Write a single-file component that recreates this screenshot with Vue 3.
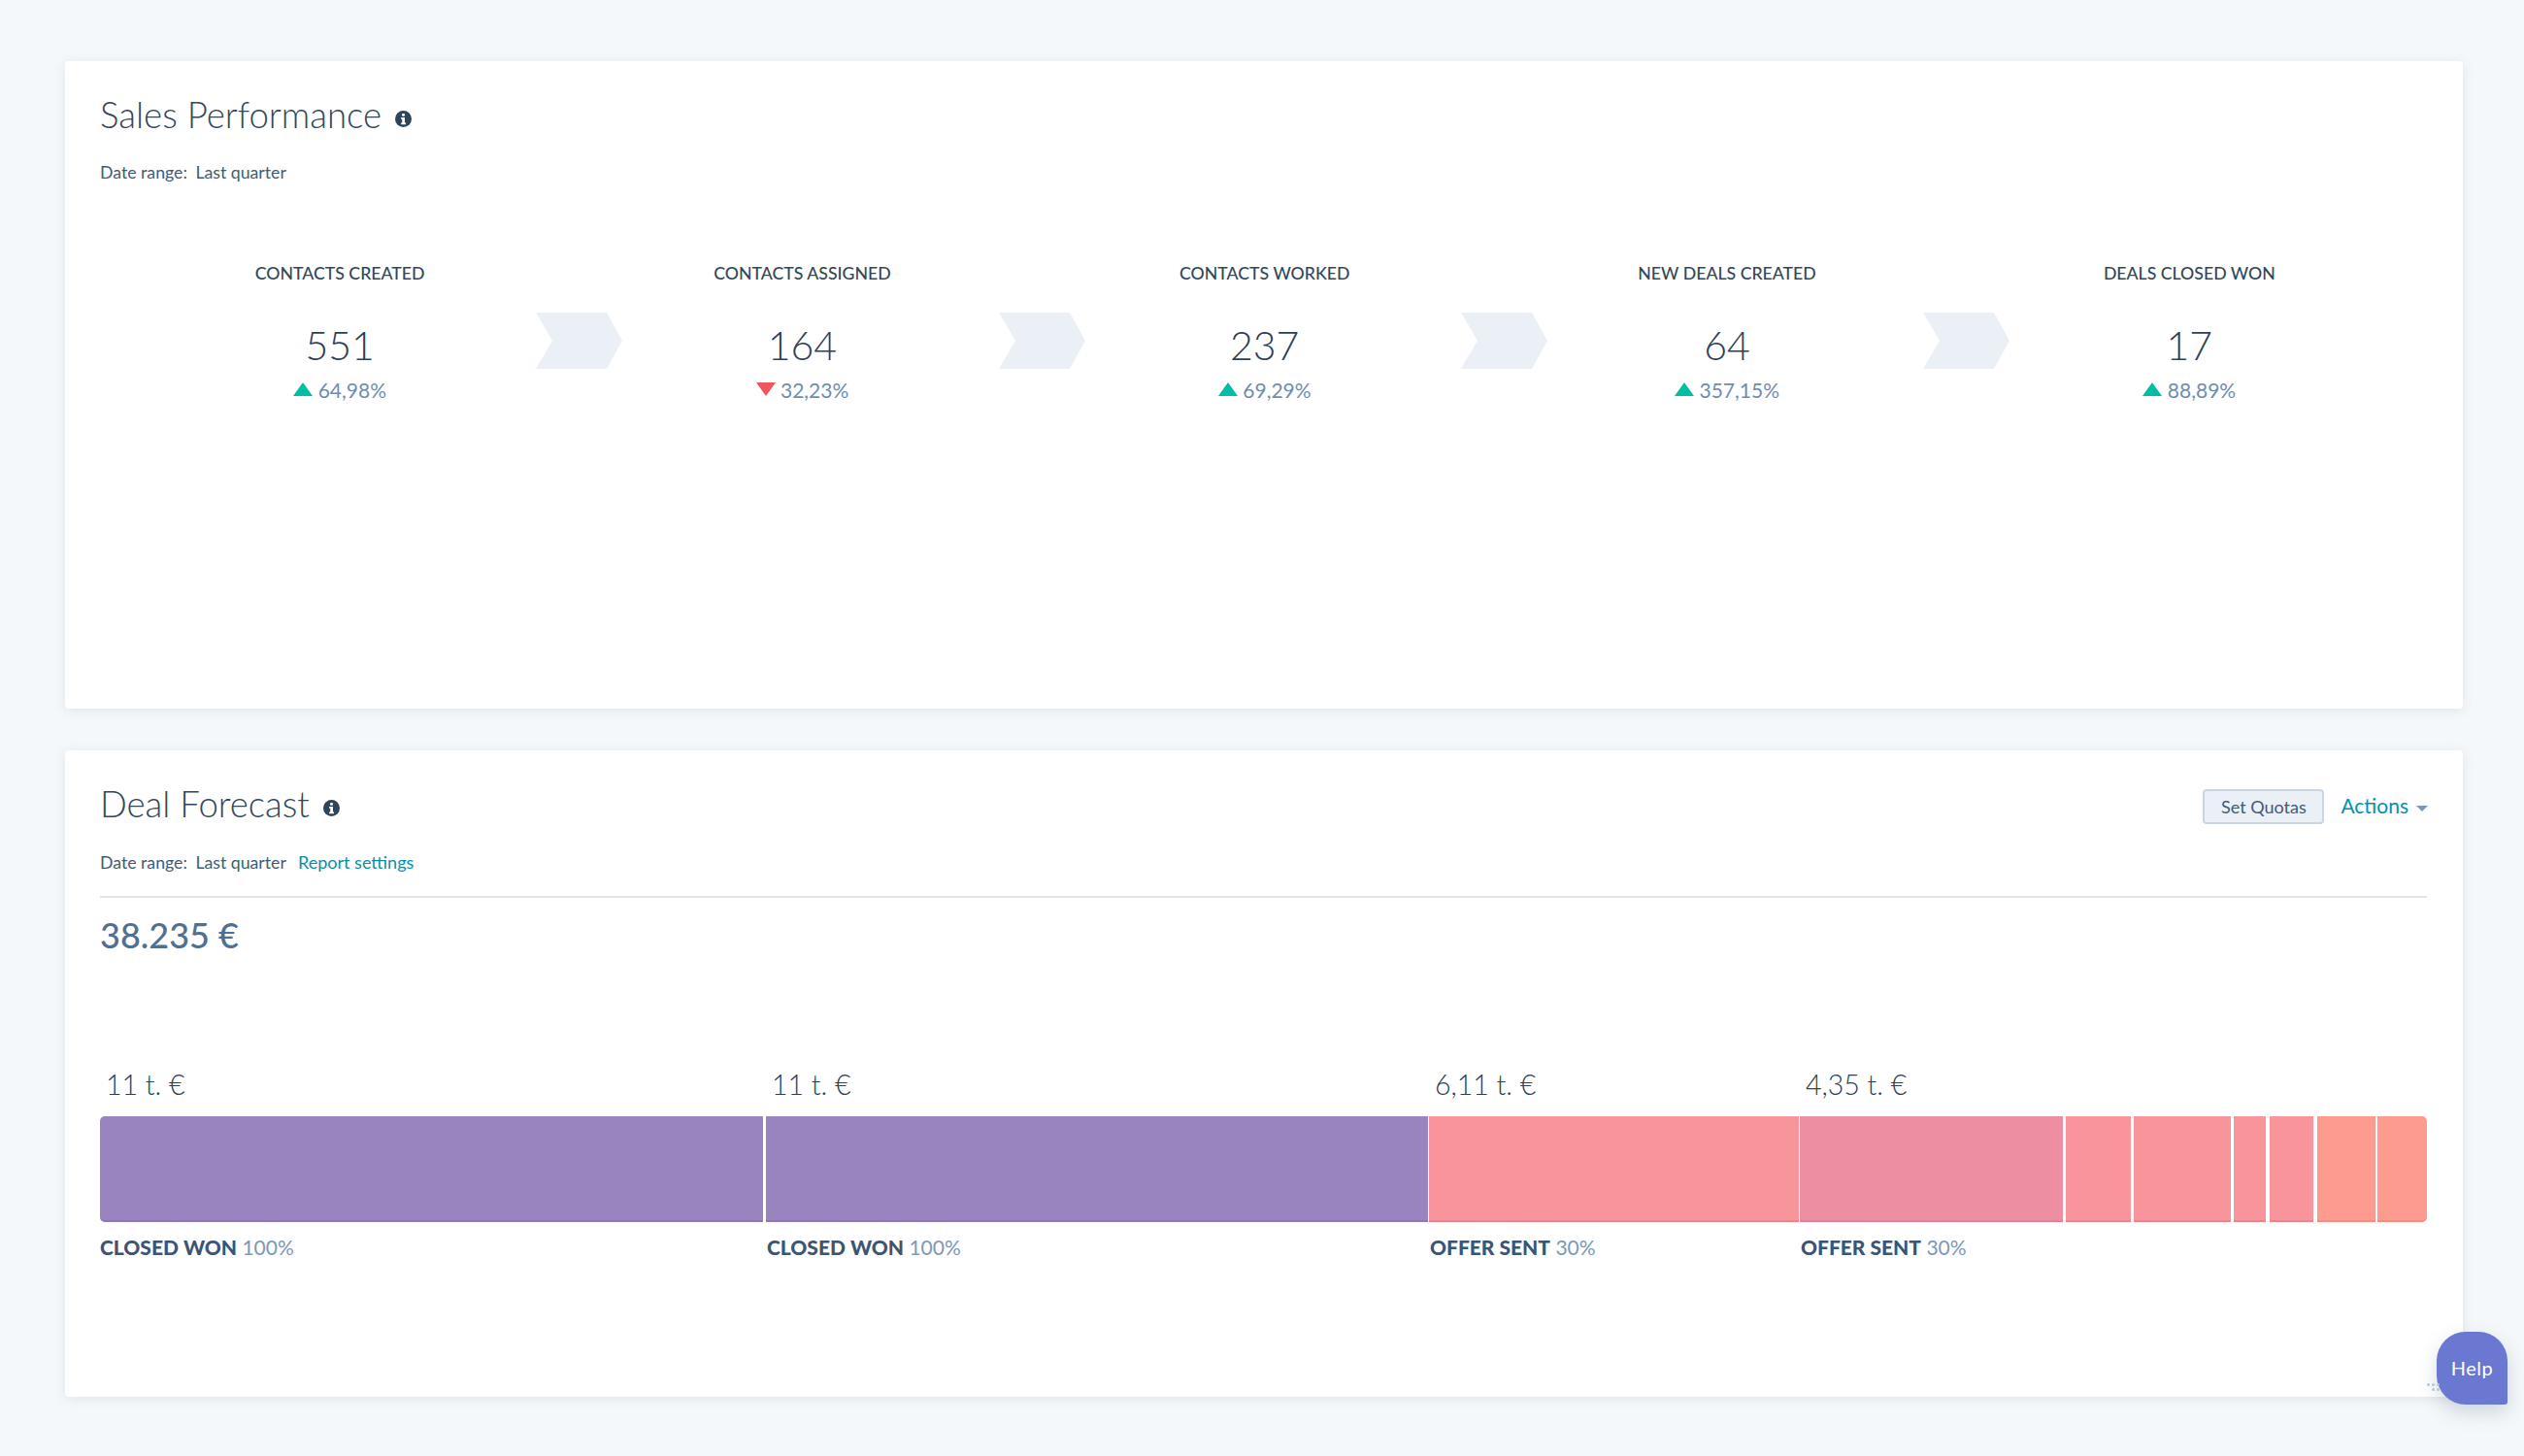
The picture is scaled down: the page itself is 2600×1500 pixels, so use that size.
<script setup>
const stats = [
  { label: 'CONTACTS CREATED', value: '551', change: '64,98%', up: true },
  { label: 'CONTACTS ASSIGNED', value: '164', change: '32,23%', up: false },
  { label: 'CONTACTS WORKED', value: '237', change: '69,29%', up: true },
  { label: 'NEW DEALS CREATED', value: '64', change: '357,15%', up: true },
  { label: 'DEALS CLOSED WON', value: '17', change: '88,89%', up: true }
]

const segments = [
  { width: 683, gap: 3, color: '#9a84c0', edge: '#8f78b8', amount: '11 t. €', stage: 'CLOSED WON', pct: '100%' },
  { width: 682, gap: 1, color: '#9a84c0', edge: '#8f78b8', amount: '11 t. €', stage: 'CLOSED WON', pct: '100%' },
  { width: 381, gap: 1, color: '#f8959b', edge: '#f0828b', amount: '6,11 t. €', stage: 'OFFER SENT', pct: '30%' },
  { width: 271, gap: 3, color: '#ee8ea3', edge: '#e67f96', amount: '4,35 t. €', stage: 'OFFER SENT', pct: '30%' },
  { width: 67, gap: 3, color: '#f8959b', edge: '#f0828b' },
  { width: 100, gap: 3, color: '#f8959b', edge: '#f0828b' },
  { width: 33, gap: 4, color: '#f8959b', edge: '#f0828b' },
  { width: 45, gap: 4, color: '#f8959b', edge: '#f0828b' },
  { width: 60, gap: 2, color: '#fd9b8e', edge: '#f58d80' },
  { width: 51, gap: 0, color: '#fd9b8e', edge: '#f58d80' }
]
</script>

<template>
  <div class="page">
    <section class="card card-sales">
      <h2 class="title">
        Sales Performance
        <svg class="info" viewBox="0 0 16 16">
          <circle cx="8" cy="8" r="8" fill="#2f4359" />
          <rect x="6.6" y="2.8" width="2.8" height="2.6" rx="1" fill="#fff" />
          <path d="M5.8 6.6h3.6v5.2h1v1.6H5.8v-1.6h1V8.2h-1z" fill="#fff" />
        </svg>
      </h2>
      <p class="range">Date range: <span class="range-value">Last quarter</span></p>

      <div class="funnel">
        <template v-for="(stat, i) in stats" :key="stat.label">
          <div class="stat">
            <div class="stat-label">{{ stat.label }}</div>
            <div class="stat-value">{{ stat.value }}</div>
            <div class="stat-change">
              <span class="tri" :class="stat.up ? 'tri-up' : 'tri-down'"></span>
              {{ stat.change }}
            </div>
          </div>
          <svg v-if="i < stats.length - 1" class="chevron" viewBox="0 0 89 58">
            <path d="M0 0h73l16 29-16 29H0l17-29z" fill="#eaf0f6" />
          </svg>
        </template>
      </div>
    </section>

    <section class="card card-forecast">
      <div class="head">
        <h2 class="title">
          Deal Forecast
          <svg class="info" viewBox="0 0 16 16">
            <circle cx="8" cy="8" r="8" fill="#2f4359" />
            <rect x="6.6" y="2.8" width="2.8" height="2.6" rx="1" fill="#fff" />
            <path d="M5.8 6.6h3.6v5.2h1v1.6H5.8v-1.6h1V8.2h-1z" fill="#fff" />
          </svg>
        </h2>
        <div class="head-actions">
          <button class="quota-btn">Set Quotas</button>
          <span class="actions">Actions<span class="caret"></span></span>
        </div>
      </div>
      <p class="range range-line">Date range: <span class="range-value">Last quarter</span> <a class="link">Report settings</a></p>
      <div class="total">38.235 €</div>

      <div class="bar">
        <div
          v-for="(seg, i) in segments"
          :key="i"
          class="seg"
          :style="{ width: seg.width + 'px', marginRight: seg.gap + 'px' }"
        >
          <div class="amount">{{ seg.amount }}</div>
          <div class="block" :style="{ background: seg.color, borderBottomColor: seg.edge }"></div>
          <div v-if="seg.stage" class="stage"><b>{{ seg.stage }}</b> {{ seg.pct }}</div>
        </div>
      </div>
    </section>

    <div class="help">Help</div>
    <div class="grip">
      <i></i><i></i><i></i><i></i><i></i>
    </div>
  </div>
</template>

<style scoped>
.page {
  width: 2600px;
  height: 1500px;
  box-sizing: border-box;
  padding: 63px 63px 0 67px;
  background: #f5f8fa;
  font-family: Lato, "Noto Sans", sans-serif;
  color: #33475b;
  position: relative;
  overflow: hidden;
}

.card {
  background: #fff;
  border-radius: 4px;
  box-shadow: 0 2px 12px rgba(66, 91, 118, 0.12);
  padding: 0 37px 0 36px;
  box-sizing: border-box;
}

.card-sales {
  height: 667px;
  padding-top: 32px;
  margin-bottom: 43px;
}

.card-forecast {
  height: 666px;
  padding-top: 32px;
}

.title {
  margin: 0;
  font-size: 36.6px;
  font-weight: 300;
  line-height: 46px;
  color: #33475b;
  display: flex;
  align-items: center;
  gap: 14px;
}

.info {
  width: 17px;
  height: 17px;
  margin-top: 8px;
}

.range {
  margin: 25px 0 0;
  font-size: 17.7px;
  line-height: 24px;
  color: #425b76;
}

.range-value {
  margin-left: 4px;
}

.funnel {
  display: flex;
  align-items: flex-start;
  margin-top: 80px;
  padding-left: 9px;
}

.stat {
  width: 476.3px;
  text-align: center;
  flex: none;
}

.stat-label {
  font-size: 17.7px;
  line-height: 24px;
  font-weight: 500;
  color: #33475b;
}

.stat-value {
  margin-top: 36px;
  font-size: 41px;
  font-weight: 300;
  line-height: 52px;
  color: #2d4057;
}

.stat-change {
  margin-top: 7px;
  font-size: 21px;
  line-height: 26px;
  font-weight: 400;
  color: #6f8db0;
}

.tri {
  display: inline-block;
  width: 0;
  height: 0;
  border-left: 10px solid transparent;
  border-right: 10px solid transparent;
  vertical-align: 2px;
}

.tri-up {
  border-bottom: 14px solid #00bda5;
}

.tri-down {
  border-top: 14px solid #f2545b;
}

.chevron {
  flex: none;
  width: 89px;
  height: 58px;
  margin: 52px -53px 0 -36px;
}

.head {
  display: flex;
  justify-content: space-between;
  align-items: center;
}

.head-actions {
  display: flex;
  align-items: center;
  gap: 17px;
  margin-top: 5px;
  margin-right: -1px;
}

.quota-btn {
  width: 125px;
  height: 36px;
  padding: 0;
  border: 2px solid #cbd6e2;
  border-radius: 4px;
  background: #eaf0f6;
  color: #425b76;
  font-family: inherit;
  font-size: 18px;
}

.actions {
  font-size: 21px;
  color: #0091ae;
  margin-bottom: 3px;
}

.caret {
  display: inline-block;
  width: 0;
  height: 0;
  margin-left: 8px;
  border-left: 6px solid transparent;
  border-right: 6px solid transparent;
  border-top: 6px solid #7c98b6;
  vertical-align: 2px;
}

.range-line {
  padding-bottom: 22px;
  border-bottom: 2px solid #dfe3eb;
}

.link {
  color: #0091ae;
  margin-left: 8px;
  font-size: 18px;
}

.total {
  margin-top: 15px;
  font-size: 36px;
  line-height: 46px;
  font-weight: 500;
  color: #516f90;
}

.bar {
  display: flex;
  margin-top: 111px;
}

.seg {
  flex: none;
  position: relative;
}

.seg:first-child .block {
  border-radius: 5px 0 0 5px;
}

.seg:last-child .block {
  border-radius: 0 5px 5px 0;
}

.amount {
  height: 53px;
  padding-left: 6px;
  font-size: 28.5px;
  font-weight: 300;
  line-height: 40px;
  white-space: nowrap;
  color: #2d4057;
}

.block {
  height: 109px;
  box-sizing: border-box;
  border-bottom: 2px solid transparent;
}

.stage {
  position: absolute;
  top: 175px;
  left: 1px;
  font-size: 21px;
  line-height: 26px;
  font-weight: 400;
  color: #7c98b6;
  white-space: nowrap;
}

.seg:first-child .stage {
  left: 0;
}

.stage b {
  font-weight: 900;
  color: #3b5573;
}

.help {
  position: absolute;
  left: 2510px;
  top: 1372px;
  width: 73px;
  height: 75px;
  padding-bottom: 2px;
  box-sizing: border-box;
  border-radius: 30px 30px 3px 30px;
  background: #6a78d1;
  color: #fff;
  font-size: 20px;
  letter-spacing: 0.5px;
  display: flex;
  align-items: center;
  justify-content: center;
  box-shadow: 0 8px 20px rgba(66, 91, 118, 0.22);
}

.grip {
  position: absolute;
  left: 2499px;
  top: 1425px;
  width: 14px;
  display: flex;
  flex-wrap: wrap;
  justify-content: flex-end;
  gap: 2px;
}

.grip i {
  width: 3px;
  height: 3px;
  border-radius: 50%;
  background: #b5c6d6;
}
</style>
